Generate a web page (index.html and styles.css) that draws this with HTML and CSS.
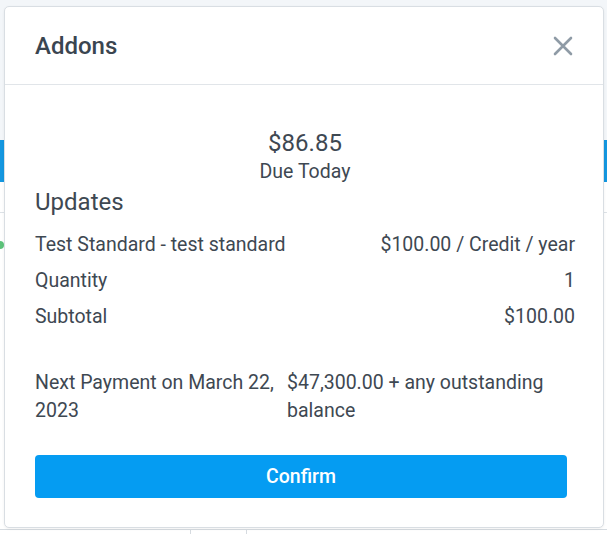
FILE: index.html
```html
<!DOCTYPE html>
<html>
<head>
<meta charset="utf-8">
<link rel="stylesheet" href="styles.css">
</head>
<body>
<div class="page">
  <div class="page-top"></div>
  <div class="page-bar"></div>
  <div class="page-gap"></div>
  <div class="page-line"></div>
  <div class="page-rest">
    <span class="dot"></span>
  </div>
  <div class="page-bottom">
    <span class="vline v1"></span>
    <span class="vline v2"></span>
  </div>
</div>

<div class="modal">
  <div class="modal-header">
    <h2 class="modal-title">Addons</h2>
    <button class="close" aria-label="Close">
      <svg width="20" height="20" viewBox="0 0 20 20"><path d="M2 2 L18 18 M18 2 L2 18" stroke="#8f9ba6" stroke-width="2.6" stroke-linecap="round" fill="none"/></svg>
    </button>
  </div>
  <div class="modal-body">
    <div class="due">
      <div class="due-amount">$86.85</div>
      <div class="due-label">Due Today</div>
    </div>
    <h3 class="section-title">Updates</h3>
    <div class="row"><span>Test Standard - test standard</span><span>$100.00 / Credit / year</span></div>
    <div class="row"><span>Quantity</span><span>1</span></div>
    <div class="row"><span>Subtotal</span><span>$100.00</span></div>
    <div class="next">
      <div class="next-label">Next Payment on March 22, 2023</div>
      <div class="next-value">$47,300.00 + any outstanding balance</div>
    </div>
    <button class="confirm">Confirm</button>
  </div>
</div>
</body>
</html>
```

FILE: styles.css
```css
html, body {
  margin: 0;
  padding: 0;
}
body {
  width: 607px;
  height: 534px;
  overflow: hidden;
  background: #ffffff;
  font-family: Roboto, "Noto Sans", sans-serif;
  color: #3e4852;
  position: relative;
}
.page {
  display: flex;
  flex-direction: column;
  height: 534px;
}
.page-top {
  height: 140px;
  background: #f3f6f9;
}
.page-bar {
  height: 42px;
  background: #1497e0;
}
.page-gap {
  height: 30px;
  background: #ffffff;
}
.page-line {
  height: 1px;
  background: #dde2e7;
}
.page-rest {
  flex: 1;
  background: #ffffff;
  position: relative;
}
.dot {
  position: absolute;
  left: -4px;
  top: 28px;
  width: 8px;
  height: 8px;
  border-radius: 50%;
  background: #5cc27a;
}
.page-bottom {
  height: 4px;
  border-top: 1px solid #d6dbe0;
  position: relative;
  background: #fff;
}
.vline {
  position: absolute;
  top: 0;
  width: 1px;
  height: 4px;
  background: #d6dbe0;
}
.v1 { left: 190px; }
.v2 { left: 246px; }

.modal {
  position: absolute;
  left: 4px;
  top: 6px;
  width: 598px;
  height: 520px;
  background: #ffffff;
  border: 1px solid #d9dee3;
  border-radius: 5px;
  box-shadow: 0 1px 3px rgba(0, 0, 0, 0.06);
  display: flex;
  flex-direction: column;
}
.modal-header {
  height: 77px;
  border-bottom: 1px solid #e1e5e9;
  display: flex;
  align-items: center;
  justify-content: space-between;
  padding: 0 30px 0 30px;
}
.modal-title {
  margin: 0;
  font-size: 24px;
  font-weight: 500;
  color: #3a4550;
}
.close {
  border: 0;
  background: none;
  padding: 0;
  width: 20px;
  height: 20px;
  display: flex;
}
.modal-body {
  padding: 43px 28px 0 30px;
}
.due {
  text-align: center;
}
.due-amount {
  font-size: 24px;
  line-height: 30px;
  color: #3e4852;
}
.due-label {
  font-size: 19.5px;
  line-height: 26px;
  margin-top: 1px;
}
.section-title {
  margin: 2px 0 16px 0;
  font-size: 24px;
  line-height: 30px;
  font-weight: 400;
}
.row {
  display: flex;
  justify-content: space-between;
  font-size: 19.5px;
  line-height: 24px;
  margin-bottom: 12px;
}
.next {
  display: grid;
  grid-template-columns: 246px 1fr;
  gap: 6px;
  font-size: 19.5px;
  line-height: 28px;
  margin-top: 40px;
}
.confirm {
  display: block;
  margin-top: 30px;
  width: 532px;
  height: 43px;
  border: 0;
  border-radius: 4px;
  background: #059cf2;
  color: #ffffff;
  font-family: Roboto, "Noto Sans", sans-serif;
  font-size: 19.5px;
  font-weight: 500;
}
```
